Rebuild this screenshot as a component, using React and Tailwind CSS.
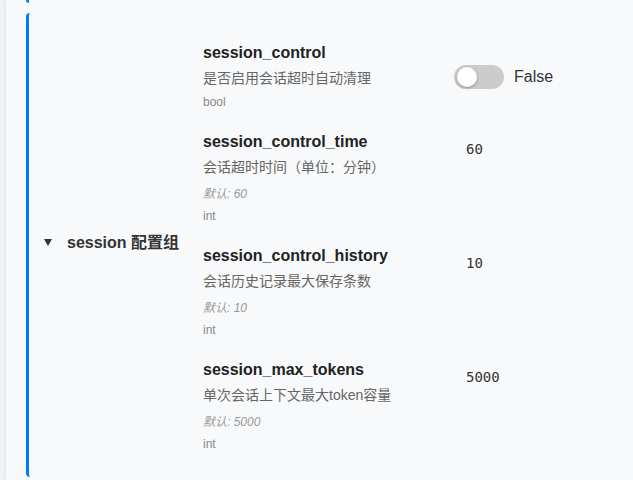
import React from 'react';

const items = [
  { name: 'session_control', desc: '是否启用会话超时自动清理', type: 'bool', value: false },
  { name: 'session_control_time', desc: '会话超时时间（单位：分钟）', def: '60', type: 'int', value: '60' },
  { name: 'session_control_history', desc: '会话历史记录最大保存条数', def: '10', type: 'int', value: '10' },
  { name: 'session_max_tokens', desc: '单次会话上下文最大token容量', def: '5000', type: 'int', value: '5000' },
];

const sans = { fontFamily: '"Liberation Sans", "Noto Sans CJK SC", sans-serif' };

const Toggle = ({ on }) => (
  <div className="flex items-center gap-[10px] mt-[22px]">
    <div className="relative w-[50px] h-[24px] rounded-full bg-[#cccccc]">
      <span className="absolute left-[3px] top-[2px] w-[20px] h-[20px] rounded-full bg-white shadow-[0_1px_3px_rgba(0,0,0,0.3)]"></span>
    </div>
    <span className="text-[16px] leading-[20px] text-[#333]">{on ? 'True' : 'False'}</span>
  </div>
);

const Item = ({ item }) => (
  <div className="flex">
    <div className="w-[251px] flex flex-col">
      <div className="text-[16px] leading-[20px] font-bold text-[#222]">{item.name}</div>
      <div className="text-[14px] leading-[20px] mt-[5px] text-[#666]">{item.desc}</div>
      {item.def && (
        <div className="text-[12px] leading-[16px] mt-[9px] italic text-[#999]">默认: {item.def}</div>
      )}
      <div className="text-[12px] leading-[16px] mt-[6px] text-[#888]">{item.type}</div>
    </div>
    <div>
      {typeof item.value === 'boolean' ? (
        <Toggle on={item.value} />
      ) : (
        <div className="mt-[7px] ml-[12px] text-[14px] leading-[20px] text-[#333] font-['DejaVu_Sans_Mono',monospace]">
          {item.value}
        </div>
      )}
    </div>
  </div>
);

export default function App() {
  return (
    <div className="w-[633px] h-[480px] overflow-hidden bg-[#f1f2f4]" style={sans}>
      <div className="ml-[6px] h-full bg-[#f8f9fa] shadow-[-1px_0_3px_rgba(0,0,0,0.06)] pl-[20px]">
        {/* tail of previous group */}
        <div className="h-[3px] border-l-[3px] border-[#007bff] rounded-bl-[4px]"></div>
        <div className="mt-[10px] flex border-l-[3px] border-[#007bff] rounded-l-[4px] pt-[30px] pb-[25px]">
          <div className="w-[174px] flex items-center gap-[15px] pl-[15px] -mt-[10px]">
            <svg width="8" height="7" viewBox="0 0 8 7" className="shrink-0">
              <polygon points="0,0 8,0 4,7" fill="#333" />
            </svg>
            <span className="text-[16px] leading-[20px] font-bold text-[#333]">session 配置组</span>
          </div>
          <div className="flex flex-col gap-[22px]">
            {items.map((it) => (
              <Item key={it.name} item={it} />
            ))}
          </div>
        </div>
      </div>
    </div>
  );
}
